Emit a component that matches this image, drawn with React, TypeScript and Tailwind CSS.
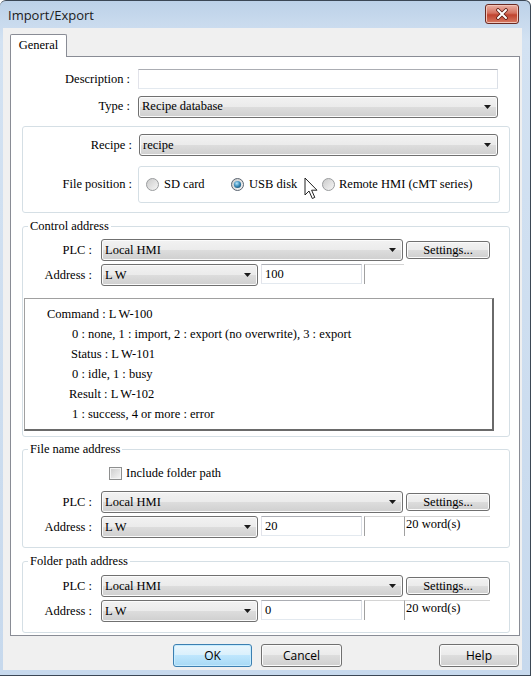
import React from "react";

const serif = "font-['Liberation_Serif','Times_New_Roman',serif]";
const sans = "font-['Open_Sans','Noto_Sans',sans-serif]";

function Arrow() {
  return (
    <svg width="7" height="4" viewBox="0 0 7 4" className="shrink-0">
      <path d="M0 0h7L3.5 4z" fill="#1a1a1a" />
    </svg>
  );
}

function Combo({ w, text }: { w: string; text: React.ReactNode }) {
  return (
    <div
      className={`${w} flex h-[22px] shrink-0 items-center rounded-[3px] border border-[#707070] bg-[linear-gradient(#f2f2f2,#ebebeb_50%,#dddddd_50%,#cfcfcf)] pl-[3px] pr-[6px] shadow-[inset_0_0_0_1px_#fbfbfb]`}
    >
      <span className="flex-1 truncate leading-[15px]">{text}</span>
      <Arrow />
    </div>
  );
}

function TextBox({ w, text }: { w: string; text?: string }) {
  return (
    <div
      className={`${w} h-[20px] shrink-0 border border-[#abadb3] border-b-[#e3e9ef] border-l-[#e2e3ea] border-r-[#dbdfe6] bg-white pl-[3px] leading-[18px]`}
    >
      {text}
    </div>
  );
}

function Btn({ w, text, def }: { w: string; text: string; def?: boolean }) {
  return (
    <div
      className={`${w} flex h-[23px] shrink-0 items-center justify-center rounded-[3px] border ${sans} text-[12px] text-black ${
        def
          ? "border-[#3c7fb1] bg-[linear-gradient(#eaf6fd,#d9f0fc_50%,#bee6fd_50%,#a7d9f5)] shadow-[inset_0_0_0_1px_#c6ecff]"
          : "border-[#707070] bg-[linear-gradient(#f2f2f2,#ebebeb_50%,#dddddd_50%,#cfcfcf)] shadow-[inset_0_0_0_1px_#fbfbfb]"
      }`}
    >
      {text}
    </div>
  );
}

function Settings() {
  return (
    <div className="ml-[3px] flex h-[18px] w-[84px] shrink-0 items-center justify-center rounded-[3px] border border-[#707070] bg-[linear-gradient(#f2f2f2,#ebebeb_50%,#dddddd_50%,#cfcfcf)] leading-[14px] shadow-[inset_0_0_0_1px_#fbfbfb]">
      Settings...
    </div>
  );
}

function Radio({ on }: { on?: boolean }) {
  return (
    <svg width="13" height="13" viewBox="0 0 13 13" className="shrink-0">
      <defs>
        <linearGradient id="rbg" x1="0" y1="0" x2="1" y2="1">
          <stop offset="0" stopColor="#c9c9c9" />
          <stop offset="1" stopColor="#f8f8f8" />
        </linearGradient>
        <radialGradient id="rdot" cx="0.4" cy="0.35" r="0.75">
          <stop offset="0" stopColor="#b6e6fb" />
          <stop offset="0.55" stopColor="#3a8ab8" />
          <stop offset="1" stopColor="#1b4966" />
        </radialGradient>
      </defs>
      <circle cx="6.5" cy="6.5" r="6" fill="url(#rbg)" stroke={on ? "#5a6470" : "#9a9c9e"} />
      {on && <circle cx="6.5" cy="6.5" r="3.6" fill="url(#rdot)" />}
    </svg>
  );
}

// "LW" is drawn a little spread out in the original font
function LW() {
  return (
    <>
      <span className="mr-[2px]">L</span>W
    </>
  );
}

function Group({ title, children }: { title: string; children: React.ReactNode }) {
  return (
    <div className="relative ml-[11px] w-[488px] rounded-[3px] border border-[#d5dfe5]">
      <span className="absolute -top-[8px] left-[5px] bg-white px-[2px] leading-[14px]">{title}</span>
      {children}
    </div>
  );
}

function PlcRow({ top }: { top: string }) {
  return (
    <div className={`${top} flex items-center`}>
      <span className="w-[78px] shrink-0 pr-[9px] text-right">PLC :</span>
      <Combo w="w-[302px]" text="Local HMI" />
      <Settings />
    </div>
  );
}

function AddrRow({ value, words }: { value: string; words?: boolean }) {
  return (
    <div className="mt-[3px] flex items-start">
      <span className="w-[78px] shrink-0 self-center pr-[9px] text-right">Address :</span>
      <Combo w="w-[157px]" text={<LW />} />
      <div className="ml-[3px]">
        <TextBox w="w-[101px]" text={value} />
      </div>
      <div className="ml-[2px] h-[20px] w-[40px] shrink-0 border-l border-t border-l-[#a0a0a0] border-t-[#d4d4d4]" />
      {words && (
        <div className="h-[20px] w-[86px] shrink-0 border-l border-t border-l-[#a0a0a0] border-t-[#d4d4d4] pl-[1px] leading-[15px]">
          20 word(s)
        </div>
      )}
    </div>
  );
}

export default function App() {
  return (
    <div className="flex h-[676px] w-[531px] flex-col overflow-hidden rounded-t-[6px] border-b border-r border-t border-[#3b4755] bg-[linear-gradient(#bcd1e8,#d3e2f2_40px,#c7d9ed)]">
      {/* title bar */}
      <div className="flex h-[27px] shrink-0 items-center justify-between pl-[8px] pr-[11px]">
        <span className={`${sans} text-[13px] leading-[16px] text-[#1b1b1b]`}>Import/Export</span>
        <div className="mb-[2px] flex h-[20px] w-[34px] items-center justify-center rounded-[3px] border border-[#6b2a22] bg-[linear-gradient(#eab1a4,#d4715f_45%,#c0432f_55%,#d77a62)] shadow-[inset_0_0_0_1px_#f2c4b8]">
          <svg width="14" height="12" viewBox="0 0 14 12">
            <path d="M3 2l8 8M11 2l-8 8" stroke="#5a1c14" strokeWidth="3.6" strokeLinecap="round" />
            <path d="M3 2l8 8M11 2l-8 8" stroke="#fff" strokeWidth="2" strokeLinecap="round" />
          </svg>
        </div>
      </div>

      {/* client */}
      <div className={`${serif} mb-[5px] ml-[3px] mr-[8px] flex-1 bg-[#f0f0f0] pl-[7px] pt-[6px] text-[12.5px] text-black`}>
        <div className="relative z-10 -mb-px flex h-[23px] w-[57px] items-center justify-center rounded-t-[2px] border-l border-r border-t border-[#898c95] bg-white pb-[2px]">
          General
        </div>

        <div className="h-[580px] w-[510px] border border-[#898c95] bg-white">
          <div className="mt-[12px] flex h-[20px] items-center">
            <span className="w-[119px] shrink-0 text-right">Description :</span>
            <div className="ml-[8px]">
              <TextBox w="w-[360px]" />
            </div>
          </div>
          <div className="mt-[7px] flex h-[21px] items-center">
            <span className="w-[119px] shrink-0 text-right">Type :</span>
            <div className="ml-[8px] flex">
              <Combo w="w-[360px]" text="Recipe database" />
            </div>
          </div>

          {/* recipe group */}
          <div className="ml-[11px] mt-[9px] w-[488px] rounded-[3px] border border-[#d5dfe5] pb-[9px]">
            <div className="mt-[7px] flex items-center">
              <span className="w-[116px] shrink-0 pr-[7px] text-right">Recipe :</span>
              <Combo w="w-[359px]" text="recipe" />
            </div>
            <div className="mt-[10px] flex items-center">
              <span className="w-[115px] shrink-0 pr-[6px] text-right">File position :</span>
              <div className="relative flex h-[37px] w-[362px] items-center rounded-[3px] border border-[#d5dfe5] pl-[7px]">
                <div className="flex w-[85px] items-center">
                  <Radio />
                  <span className="ml-[5px]">SD card</span>
                </div>
                <div className="flex w-[91px] items-center">
                  <Radio on />
                  <span className="ml-[5px]">USB disk</span>
                </div>
                <div className="flex items-center">
                  <Radio />
                  <span className="ml-[4px]">Remote HMI (cMT series)</span>
                </div>
                <svg
                  width="14"
                  height="23"
                  viewBox="0 0 14 23"
                  className="absolute left-[165px] top-[10px]"
                >
                  <path
                    d="M1 1V18L5 14L8.3 21.5L10.8 20.4L7.6 13.2H13Z"
                    fill="#fff"
                    stroke="#222"
                    strokeWidth="1"
                    strokeLinejoin="round"
                  />
                </svg>
              </div>
            </div>
          </div>

          {/* control address */}
          <div className="mt-[13px]">
            <Group title="Control address">
              <div className="pb-[5px]">
                <PlcRow top="mt-[12px]" />
                <AddrRow value="100" />
                <div className="ml-[1px] mt-[12px] h-[133px] w-[470px] border border-[#a0a0a0] border-b-2 border-r-2 border-b-[#6a6a6a] border-r-[#6a6a6a] bg-white pt-[5px] leading-[20px]">
                  <div className="pl-[22px]">Command : <LW />-100</div>
                  <div className="pl-[47px]">0 : none, 1 : import, 2 : export (no overwrite), 3 : export</div>
                  <div className="pl-[46px]">Status : <LW />-101</div>
                  <div className="pl-[47px]">0 : idle, 1 : busy</div>
                  <div className="pl-[44px]">Result : <LW />-102</div>
                  <div className="pl-[47px]">1 : success, 4 or more : error</div>
                </div>
              </div>
            </Group>
          </div>

          {/* file name address */}
          <div className="mt-[12px]">
            <Group title="File name address">
              <div className="pb-[9px]">
                <div className="mt-[17px] flex h-[13px] items-center pl-[86px]">
                  <div className="h-[13px] w-[13px] border border-[#8e8f8f] bg-[linear-gradient(135deg,#cbcbcb,#f6f6f6)] shadow-[inset_0_0_0_1px_#f4f4f4]" />
                  <span className="ml-[4px]">Include folder path</span>
                </div>
                <PlcRow top="mt-[11px]" />
                <AddrRow value="20" words />
              </div>
            </Group>
          </div>

          {/* folder path address */}
          <div className="mt-[13px]">
            <Group title="Folder path address">
              <div className="pb-[10px]">
                <PlcRow top="mt-[13px]" />
                <AddrRow value="0" words />
              </div>
            </Group>
          </div>
        </div>

        <div className="mt-[8px] flex w-[509px] items-center">
          <div className="ml-[163px]">
            <Btn w="w-[79px]" text="OK" def />
          </div>
          <div className="ml-[9px]">
            <Btn w="w-[81px]" text="Cancel" />
          </div>
          <div className="ml-auto">
            <Btn w="w-[80px]" text="Help" />
          </div>
        </div>
      </div>
    </div>
  );
}
